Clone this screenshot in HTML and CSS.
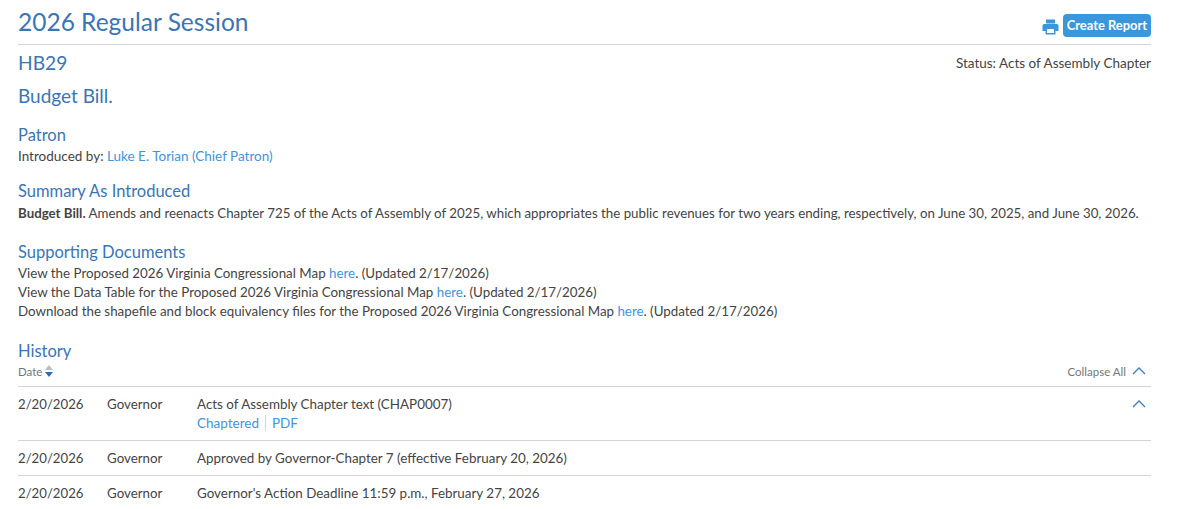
FILE: index.html
```html
<!DOCTYPE html>
<html lang="en">
<head>
    <meta charset="UTF-8">
    <meta name="viewport" content="width=device-width, initial-scale=1.0">
    <title>HB29 - 2026 Regular Session</title>
    <link rel="stylesheet" href="styles.css">
</head>
<body>
    <div class="container">
        <!-- Session header -->
        <div class="session-header">
            <h1 class="session-title">2026 Regular Session</h1>
            <div class="report">
                <svg class="print-icon" viewBox="0 0 16 16" width="17" height="16" aria-hidden="true">
                    <path fill="#3b97dc" fill-rule="evenodd" d="M3.5 0.5h9v4h-9z M1.5 5h13a1.5 1.5 0 0 1 1.5 1.5V12h-3v3.5H3V12H0V6.500A1.500 1.500 0 0 1 1.500 5z M4.500 10v4h7v-4z"/>
                </svg>
                <button class="btn-report">Create Report</button>
            </div>
        </div>

        <div class="bill-row">
            <h2 class="bill-number">HB29</h2>
            <span class="status">Status: Acts of Assembly Chapter</span>
        </div>
        <h2 class="bill-title">Budget Bill.</h2>

        <section class="patron">
            <h3 class="section-title">Patron</h3>
            <p>Introduced by: <a href="#">Luke E. Torian (Chief Patron)</a></p>
        </section>

        <section class="summary">
            <h3 class="section-title">Summary As Introduced</h3>
            <p><strong>Budget Bill.</strong> Amends and reenacts Chapter 725 of the Acts of Assembly of 2025, which appropriates the public revenues for two years ending, respectively, on June 30, 2025, and June 30, 2026.</p>
        </section>

        <section class="documents">
            <h3 class="section-title">Supporting Documents</h3>
            <p>View the Proposed 2026 Virginia Congressional Map <a href="#">here</a>. (Updated 2/17/2026)</p>
            <p>View the Data Table for the Proposed 2026 Virginia Congressional Map <a href="#">here</a>. (Updated 2/17/2026)</p>
            <p>Download the shapefile and block equivalency files for the Proposed 2026 Virginia Congressional Map <a href="#">here</a>. (Updated 2/17/2026)</p>
        </section>

        <section class="history">
            <h3 class="section-title">History</h3>
            <div class="history-head">
                <span class="sort">Date
                    <svg viewBox="0 0 8 12" width="8" height="12" aria-hidden="true">
                        <path fill="#b9bfc6" d="M4 0l4 5H0z"/>
                        <path fill="#2f6db5" d="M4 12L0 7h8z"/>
                    </svg>
                </span>
                <span class="collapse-all">Collapse All
                    <svg class="chevron" viewBox="0 0 14 8" width="14" height="8" aria-hidden="true">
                        <path fill="none" stroke="#3f7cc0" stroke-width="1.300" d="M1 7l6-6 6 6"/>
                    </svg>
                </span>
            </div>

            <div class="history-row">
                <span class="date">2/20/2026</span>
                <span class="actor">Governor</span>
                <div class="action">
                    <div>Acts of Assembly Chapter text (CHAP0007)</div>
                    <div class="action-links"><a href="#">Chaptered</a><a href="#">PDF</a></div>
                </div>
                <svg class="chevron row-chevron" viewBox="0 0 14 8" width="14" height="8" aria-hidden="true">
                    <path fill="none" stroke="#3f7cc0" stroke-width="1.300" d="M1 7l6-6 6 6"/>
                </svg>
            </div>
            <div class="history-row">
                <span class="date">2/20/2026</span>
                <span class="actor">Governor</span>
                <div class="action">Approved by Governor-Chapter 7 (effective February 20, 2026)</div>
            </div>
            <div class="history-row">
                <span class="date">2/20/2026</span>
                <span class="actor">Governor</span>
                <div class="action">Governor's Action Deadline 11:59 p.m., February 27, 2026</div>
            </div>
        </section>
    </div>
</body>
</html>
```

FILE: styles.css
```css
* {
    margin: 0;
    padding: 0;
    box-sizing: border-box;
}

body {
    font-family: 'Lato', sans-serif;
    font-size: 13.3px;
    line-height: 19px;
    color: #444;
    background: #fff;
    overflow: hidden;
}

.container {
    width: 1133px;
    margin-left: 18px;
}

a {
    color: #4294dc;
    text-decoration: none;
}

h1, h2, h3 {
    font-weight: 400;
    color: #3a75b5;
}

.session-header {
    display: flex;
    justify-content: space-between;
    align-items: flex-end;
    height: 45px;
    padding-bottom: 7px;
    border-bottom: 1px solid #d4d4d4;
}

.session-title {
    font-size: 24.5px;
    line-height: 32px;
    margin-bottom: -1px;
}

.report {
    display: flex;
    align-items: center;
    gap: 4px;
}

.print-icon {
    margin-top: 3px;
}

.btn-report {
    font-family: 'Lato', sans-serif;
    font-size: 12.9px;
    font-weight: 700;
    line-height: 23px;
    height: 23px;
    padding: 0 4px;
    color: #fff;
    background: #3b97dc;
    border: none;
    border-radius: 4px;
}

.bill-row {
    display: flex;
    justify-content: space-between;
    align-items: center;
    margin-top: 6px;
}

.status {
    font-size: 13.5px;
}

.bill-number {
    font-size: 19.2px;
    line-height: 24px;
}

.bill-title {
    font-size: 19px;
    line-height: 24px;
    margin-top: 9px;
}

.section-title {
    font-size: 16.5px;
    line-height: 22px;
    margin-bottom: 2px;
}

.patron {
    margin-top: 16px;
    font-size: 13.5px;
}

.patron .section-title {
    margin-bottom: 1px;
}

.summary {
    margin-top: 14px;
}

.documents {
    margin-top: 18px;
    font-size: 13.35px;
}

.documents .section-title {
    margin-bottom: 1px;
}

.history {
    margin-top: 19px;
}

.history .section-title {
    margin-bottom: 1px;
}

.history-head {
    display: flex;
    justify-content: space-between;
    align-items: center;
    height: 24px;
    padding-bottom: 7px;
    font-size: 11.5px;
    color: #777;
    border-bottom: 1px solid #d4d4d4;
}

.sort, .collapse-all {
    display: flex;
    align-items: center;
    gap: 3px;
}

.collapse-all {
    gap: 6px;
    padding-right: 5px;
}

.history-row {
    display: flex;
    padding: 8px 0 7px;
    border-bottom: 1px solid #d4d4d4;
}

.history-row:last-child {
    border-bottom: none;
}

.date {
    width: 89px;
    font-size: 13.2px;
}

.actor {
    width: 90px;
}

.action {
    flex: 1;
    font-size: 13.4px;
}

.action-links {
    font-size: 13.5px;
}

.action-links a + a {
    margin-left: 6px;
    padding-left: 6px;
    border-left: 1px solid #c9d6e2;
}

.row-chevron {
    margin: 5px 5px 0 0;
}
```
